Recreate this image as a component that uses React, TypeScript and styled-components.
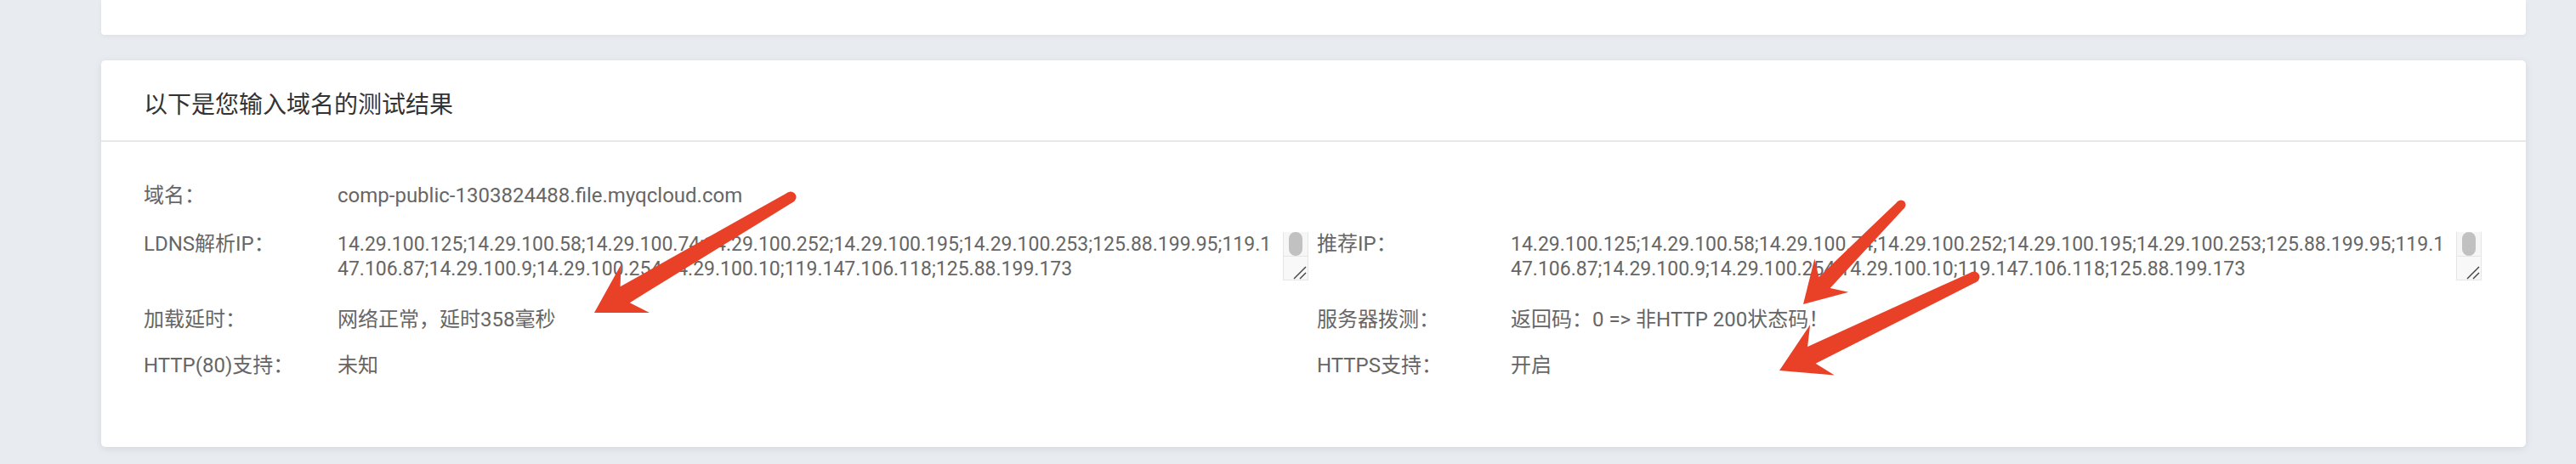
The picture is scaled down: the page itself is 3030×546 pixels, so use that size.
import React from "react";
import styled, { createGlobalStyle } from "styled-components";

const GlobalStyle = createGlobalStyle`
  html, body {
    margin: 0;
    padding: 0;
    background: #e8ecf0;
    font-family: Roboto, "Noto Sans CJK SC", sans-serif;
  }
`;

const Page = styled.div`
  position: relative;
  width: 3030px;
  height: 546px;
  box-sizing: border-box;
  padding: 0 59px 0 119px;
  display: flex;
  flex-direction: column;
  gap: 30px;
  overflow: hidden;
`;

const TopCard = styled.div`
  height: 41px;
  background: #fff;
  border-radius: 0 0 4px 4px;
  box-shadow: 0 2px 6px rgba(0, 0, 0, 0.05);
`;

const ResultCard = styled.div`
  height: 455px;
  background: #fff;
  border-radius: 5px;
  box-shadow: 0 2px 10px rgba(0, 0, 0, 0.09);
`;

const CardHeader = styled.div`
  height: 96px;
  box-sizing: border-box;
  padding: 5px 50px 0;
  display: flex;
  align-items: center;
  border-bottom: 2px solid #e8e8e8;
  font-size: 28px;
  color: #333;
`;

const CardBody = styled.div`
  display: grid;
  grid-template-columns: 1380px 1fr;
  row-gap: 25px;
  padding: 49px 42px 0 50px;
`;

const Field = styled.div<{ $tall?: boolean }>`
  display: flex;
  align-items: flex-start;
  margin: ${(p) => (p.$tall ? "3px 0 7px" : "0")};
`;

const Label = styled.span`
  width: 228px;
  flex-shrink: 0;
  font-size: 24px;
  line-height: 29px;
  color: #666;
  white-space: nowrap;
`;

const Value = styled.span`
  font-size: 24px;
  line-height: 29px;
  color: #666;
  white-space: nowrap;
`;

const IpBox = styled.div`
  display: flex;
  width: 1142px;
  height: 57px;
`;

const IpText = styled.div`
  flex: 1;
  padding-right: 4px;
  font-size: 23px;
  line-height: 29px;
  color: #666;
  word-break: break-all;
  overflow: hidden;
`;

const Scrollbar = styled.div`
  width: 30px;
  display: flex;
  flex-direction: column;
  box-sizing: border-box;
  border-left: 1px solid #e6e6e6;
  border-right: 1px solid #e6e6e6;
`;

const Track = styled.div`
  height: 28px;
  display: flex;
  justify-content: center;
  background: #f6f6f6;
`;

const Thumb = styled.div`
  width: 16px;
  height: 100%;
  border-radius: 8px;
  background: #c1c1c1;
`;

const Resizer = styled.div`
  flex: 1;
  position: relative;
  background: #f8f8f8;
  border-top: 1px solid #e6e6e6;
  border-bottom: 1px solid #e6e6e6;
`;

const Grip = styled.svg`
  position: absolute;
  right: 1px;
  bottom: 0;
`;

const Overlay = styled.svg`
  position: absolute;
  top: 0;
  left: 0;
  pointer-events: none;
`;

const ipList =
  "14.29.100.125;14.29.100.58;14.29.100.74;14.29.100.252;14.29.100.195;14.29.100.253;125.88.199.95;119.147.106.87;14.29.100.9;14.29.100.254;14.29.100.10;119.147.106.118;125.88.199.173";

const IpArea: React.FC<{ text: string }> = ({ text }) => (
  <IpBox>
    <IpText>{text}</IpText>
    <Scrollbar>
      <Track>
        <Thumb />
      </Track>
      <Resizer>
        <Grip width="16" height="16" viewBox="0 0 16 16">
          <line x1="1" y1="15" x2="15" y2="1" stroke="#444" strokeWidth="1.5" />
          <line x1="8" y1="15" x2="15" y2="8" stroke="#444" strokeWidth="1.5" />
        </Grip>
      </Resizer>
    </Scrollbar>
  </IpBox>
);

type Pt = [number, number];

// annotation arrows drawn over the screenshot
const arrows: { tail: Pt; tip: Pt; s: number }[] = [
  { tail: [930, 232], tip: [699, 368], s: 1 },
  { tail: [2236, 241], tip: [2121, 358], s: 0.85 },
  { tail: [2322, 326], tip: [2093, 436], s: 1 },
];

function arrowPoints(tail: Pt, tip: Pt, s: number) {
  const dx = tip[0] - tail[0];
  const dy = tip[1] - tail[1];
  const len = Math.hypot(dx, dy);
  const ux = dx / len;
  const uy = dy / len;
  const nx = -uy;
  const ny = ux;
  const L = 56 * s;
  const H = 33 * s;
  const neck = 42 * s;
  const w0 = 6.5 * s;
  const w1 = 11 * s;
  const at = (along: number, side: number): string =>
    `${tip[0] - ux * along + nx * side},${tip[1] - uy * along + ny * side}`;
  return [
    `${tail[0] + nx * w0},${tail[1] + ny * w0}`,
    at(neck, w1),
    at(L, H),
    `${tip[0]},${tip[1]}`,
    at(L, -H),
    at(neck, -w1),
    `${tail[0] - nx * w0},${tail[1] - ny * w0}`,
  ].join(" ");
}

export default function App() {
  return (
    <>
      <GlobalStyle />
      <Page>
        <TopCard />
        <ResultCard>
          <CardHeader>以下是您输入域名的测试结果</CardHeader>
          <CardBody>
            <Field>
              <Label>域名：</Label>
              <Value>comp-public-1303824488.file.myqcloud.com</Value>
            </Field>
            <div />
            <Field $tall>
              <Label>LDNS解析IP：</Label>
              <IpArea text={ipList} />
            </Field>
            <Field $tall>
              <Label>推荐IP：</Label>
              <IpArea text={ipList} />
            </Field>
            <Field>
              <Label>加载延时：</Label>
              <Value>网络正常，延时358毫秒</Value>
            </Field>
            <Field>
              <Label>服务器拨测：</Label>
              <Value>返回码：0 =&gt; 非HTTP 200状态码！</Value>
            </Field>
            <Field>
              <Label>HTTP(80)支持：</Label>
              <Value>未知</Value>
            </Field>
            <Field>
              <Label>HTTPS支持：</Label>
              <Value>开启</Value>
            </Field>
          </CardBody>
        </ResultCard>
        <Overlay width="3030" height="546" viewBox="0 0 3030 546">
          {arrows.map((a, i) => (
            <g key={i} fill="#e94128">
              <polygon points={arrowPoints(a.tail, a.tip, a.s)} />
              <circle cx={a.tail[0]} cy={a.tail[1]} r={6.5 * a.s} />
            </g>
          ))}
        </Overlay>
      </Page>
    </>
  );
}
